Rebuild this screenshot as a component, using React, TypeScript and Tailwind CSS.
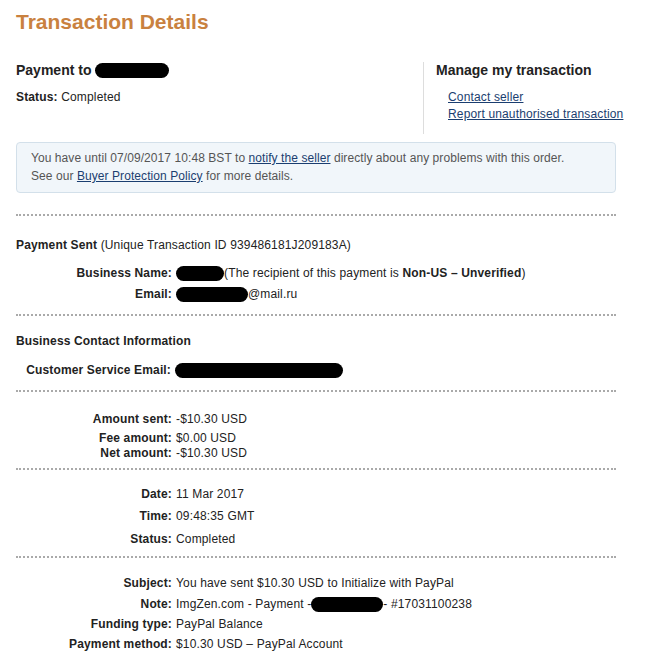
import React from "react";

const Redact = ({ w }: { w: number }) => (
  <span
    className="inline-block h-[15px] rounded-full bg-black align-middle"
    style={{ width: w }}
  />
);

const Row = ({
  label,
  children,
  mt,
}: {
  label: string;
  children: React.ReactNode;
  mt: string;
}) => (
  <div className={`flex leading-[15px] ${mt}`}>
    <div className="w-[156px] shrink-0 text-right font-bold">{label}</div>
    <div className="pl-[4px] flex items-center whitespace-nowrap">{children}</div>
  </div>
);

export default function App() {
  return (
    <div
      className="w-[647px] h-[671px] overflow-hidden bg-white text-[12px] tracking-[0.15px] text-[#222]"
      style={{ fontFamily: '"Liberation Sans", Arial, sans-serif' }}
    >
      <div className="px-[16px] w-[632px]">
        <h1 className="pt-[10px] text-[21px] leading-[24px] font-bold tracking-normal text-[#c9813f]">
          Transaction Details
        </h1>

        {/* header: recipient + manage links */}
        <div className="mt-[28px] flex h-[72px]">
          <div className="w-[407px] shrink-0">
            <div className="text-[14px] leading-[17px] font-bold tracking-normal flex items-center">
              Payment to&nbsp;<Redact w={74} />
            </div>
            <div className="mt-[11px] leading-[15px]">
              <span className="font-bold">Status:</span> Completed
            </div>
          </div>
          <div className="border-l border-[#dddddd] pl-[12px] whitespace-nowrap">
            <div className="text-[14px] leading-[17px] font-bold tracking-normal">
              Manage my transaction
            </div>
            <div className="pl-[12px] mt-[10px] flex flex-col items-start leading-[17px] text-[#1b3e70]">
              <a className="underline" href="#">Contact seller</a>
              <a className="underline" href="#">Report unauthorised transaction</a>
            </div>
          </div>
        </div>

        {/* protection notice */}
        <div className="mt-[8px] w-[600px] rounded-[4px] border border-[#d3e0ea] bg-[#f1f6fa] px-[14px] pt-[6px] pb-[7px] leading-[18px] tracking-[0.07px] text-[#555]">
          <div>
            You have until 07/09/2017 10:48 BST to{" "}
            <a className="underline text-[#1b3e70]" href="#">notify the seller</a> directly
            about any problems with this order.
          </div>
          <div>
            See our{" "}
            <a className="underline text-[#1b3e70]" href="#">Buyer Protection Policy</a> for
            more details.
          </div>
        </div>

        {/* payment sent */}
        <div className="mt-[21px] w-[600px] border-t-2 border-dotted border-[#aaaaaa] pt-[22px] pb-[12px]">
          <div className="leading-[15px]">
            <span className="font-bold">Payment Sent</span> (Unique Transaction ID
            939486181J209183A)
          </div>
          <Row label="Business Name:" mt="mt-[13px]">
            <Redact w={48} />
            <span>
              (The recipient of this payment is <b>Non-US – Unverified</b>)
            </span>
          </Row>
          <Row label="Email:" mt="mt-[6px]">
            <Redact w={72} />
            <span>@mail.ru</span>
          </Row>
        </div>

        {/* business contact */}
        <div className="w-[600px] border-t-2 border-dotted border-[#aaaaaa] pt-[18px] pb-[12px]">
          <div className="leading-[15px] font-bold">Business Contact Information</div>
          <div className="flex leading-[15px] mt-[14px]">
            <div className="w-[155px] shrink-0 text-right font-bold">Customer Service Email:</div>
            <div className="pl-[4px] flex items-center">
              <Redact w={168} />
            </div>
          </div>
        </div>

        {/* amounts */}
        <div className="w-[600px] border-t-2 border-dotted border-[#aaaaaa] pt-[20px] pb-[7px]">
          <Row label="Amount sent:" mt="mt-0">-$10.30 USD</Row>
          <Row label="Fee amount:" mt="mt-[4px]">$0.00 USD</Row>
          <Row label="Net amount:" mt="mt-0">-$10.30 USD</Row>
        </div>

        {/* date and status */}
        <div className="w-[600px] border-t-2 border-dotted border-[#aaaaaa] pt-[17px] pb-[9px]">
          <Row label="Date:" mt="mt-0">11 Mar 2017</Row>
          <Row label="Time:" mt="mt-[7px]">09:48:35 GMT</Row>
          <Row label="Status:" mt="mt-[8px]">Completed</Row>
        </div>

        {/* details */}
        <div className="w-[600px] border-t-2 border-dotted border-[#aaaaaa] pt-[18px]">
          <Row label="Subject:" mt="mt-0">You have sent $10.30 USD to Initialize with PayPal</Row>
          <Row label="Note:" mt="mt-[6px]">
            <span>ImgZen.com - Payment -</span>
            <Redact w={72} />
            <span>- #17031100238</span>
          </Row>
          <Row label="Funding type:" mt="mt-[5px]">PayPal Balance</Row>
          <Row label="Payment method:" mt="mt-[5px]">$10.30 USD – PayPal Account</Row>
        </div>
      </div>
    </div>
  );
}
